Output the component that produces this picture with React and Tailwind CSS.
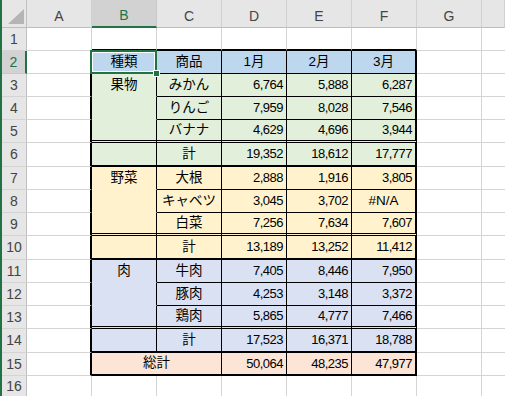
const COLS = ['A', 'B', 'C', 'D', 'E', 'F', 'G', ''];

// table body B2:F15, one entry per sheet row
const table = [
  { fill: 'bg-[#bdd7ee]', cells: ['種類', '商品', '1月', '2月', '3月'], head: true },
  { fill: 'bg-[#e2efda]', cells: ['果物', 'みかん', '6,764', '5,888', '6,287'] },
  { fill: 'bg-[#e2efda]', cells: ['', 'りんご', '7,959', '8,028', '7,546'] },
  { fill: 'bg-[#e2efda]', cells: ['', 'バナナ', '4,629', '4,696', '3,944'], line: 'double' },
  { fill: 'bg-[#e2efda]', cells: ['', '計', '19,352', '18,612', '17,777'], line: 'thick' },
  { fill: 'bg-[#fff2cc]', cells: ['野菜', '大根', '2,888', '1,916', '3,805'] },
  { fill: 'bg-[#fff2cc]', cells: ['', 'キャベツ', '3,045', '3,702', '#N/A'] },
  { fill: 'bg-[#fff2cc]', cells: ['', '白菜', '7,256', '7,634', '7,607'], line: 'double' },
  { fill: 'bg-[#fff2cc]', cells: ['', '計', '13,189', '13,252', '11,412'], line: 'thick' },
  { fill: 'bg-[#d9e1f2]', cells: ['肉', '牛肉', '7,405', '8,446', '7,950'] },
  { fill: 'bg-[#d9e1f2]', cells: ['', '豚肉', '4,253', '3,148', '3,372'] },
  { fill: 'bg-[#d9e1f2]', cells: ['', '鶏肉', '5,865', '4,777', '7,466'], line: 'double' },
  { fill: 'bg-[#d9e1f2]', cells: ['', '計', '17,523', '16,371', '18,788'], line: 'thick' },
  { fill: 'bg-[#fce4d6]', cells: ['総計', null, '50,064', '48,235', '47,977'], line: 'thick' },
];

function ColHeader({ label, selected }) {
  if (selected) {
    return (
      <div className="flex items-center justify-center pt-[5px] bg-[#d2d2d2] border-r border-r-[#c8c8c8] border-b-2 border-b-[#217346] text-[14px] text-[#217346]">
        {label}
      </div>
    );
  }
  return (
    <div className="flex items-center justify-center pt-[5px] bg-[#e6e6e6] border-r border-r-[#d0d0d0] border-b border-b-[#bdbdbd] text-[14px] text-[#444]">
      {label}
    </div>
  );
}

function RowHeader({ n }) {
  if (n === 2) {
    return (
      <div className="flex items-center justify-center bg-[#d2d2d2] border-r-2 border-r-[#217346] border-b border-b-[#c8c8c8] text-[14px] text-[#217346]">
        {n}
      </div>
    );
  }
  return (
    <div className="flex items-center justify-center bg-[#e6e6e6] border-r border-r-[#c0c0c0] border-b border-b-[#d4d4d4] text-[14px] text-[#444]">
      {n}
    </div>
  );
}

function TableCell({ row, col, text, span }) {
  let bottom;
  if (row.line === 'double') bottom = 'border-b-[3px] border-double border-b-black';
  else if (row.line === 'thick') bottom = 'border-b-2 border-b-black';
  else if (row.head) bottom = 'border-b border-b-black';
  else if (col === 1) bottom = 'border-b border-b-transparent';
  else bottom = 'border-b border-b-black';

  const right = col === 5 ? 'border-r-2 border-r-black' : 'border-r border-r-black';
  const numeric = !row.head && col >= 3 && !text.startsWith('#');
  const align = numeric ? 'justify-end pr-[3px] text-[13px] tracking-[-0.5px]' : 'justify-center text-[13.5px]';
  const selected = row.head && col === 1;

  return (
    <div className={`relative flex items-center whitespace-nowrap text-black ${row.fill} ${bottom} ${right} ${align} ${span ? 'col-span-2' : ''}`}>
      {text}
      {selected && (
        <div className="pointer-events-none absolute -left-[2px] -top-px -right-px -bottom-px z-10 border-2 border-[#217346] shadow-[inset_0_0_0_1px_#fff]">
          <div className="absolute -right-[5px] -bottom-[5px] h-[7px] w-[7px] border border-white bg-[#217346]" />
        </div>
      )}
    </div>
  );
}

function SheetRow({ n }) {
  const out = [<RowHeader key="h" n={n} />];
  const row = n >= 2 && n <= 15 ? table[n - 2] : null;

  for (let c = 0; c < 8; c++) {
    if (row && c >= 1 && c <= 5) {
      const text = row.cells[c - 1];
      if (text === null) continue;
      const span = c === 1 && row.cells[1] === null;
      out.push(<TableCell key={c} row={row} col={c} text={text} span={span} />);
    } else if (row && c === 0) {
      out.push(<div key={c} className="border-r-2 border-r-black border-b border-b-[#d4d4d4]" />);
    } else if (n === 1 && c >= 1 && c <= 5) {
      out.push(<div key={c} className="border-r border-r-[#d4d4d4] border-b-2 border-b-black" />);
    } else if (c === 7) {
      out.push(<div key={c} className="border-b border-b-[#d4d4d4]" />);
    } else {
      out.push(<div key={c} className="border-r border-b border-[#d4d4d4]" />);
    }
  }
  return out;
}

export default function App() {
  const rows = Array.from({ length: 16 }, (_, i) => i + 1);
  return (
    <div className="h-screen w-full overflow-hidden bg-white border-l-2 border-l-[#217346] font-['Liberation_Sans','Noto_Sans_CJK_JP',sans-serif]">
      <div className="grid h-full grid-cols-[25px_repeat(7,65px)_1fr] grid-rows-[28px_repeat(5,23px)_24px_repeat(3,23px)_24px_repeat(3,23px)_24px_23px_1fr]">
        {/* corner with the select-all triangle */}
        <div className="flex items-end justify-end pr-[2px] pb-[3px] bg-[#e6e6e6] border-r border-r-[#c0c0c0] border-b border-b-[#bdbdbd]">
          <svg width="16" height="15" viewBox="0 0 16 15">
            <polygon points="0,15 16,15 16,0" fill="#b4b4b4" />
          </svg>
        </div>
        {COLS.map((c, i) => (
          <ColHeader key={i} label={c} selected={c === 'B'} />
        ))}
        {rows.map((n) => (
          <SheetRow key={n} n={n} />
        ))}
      </div>
    </div>
  );
}
